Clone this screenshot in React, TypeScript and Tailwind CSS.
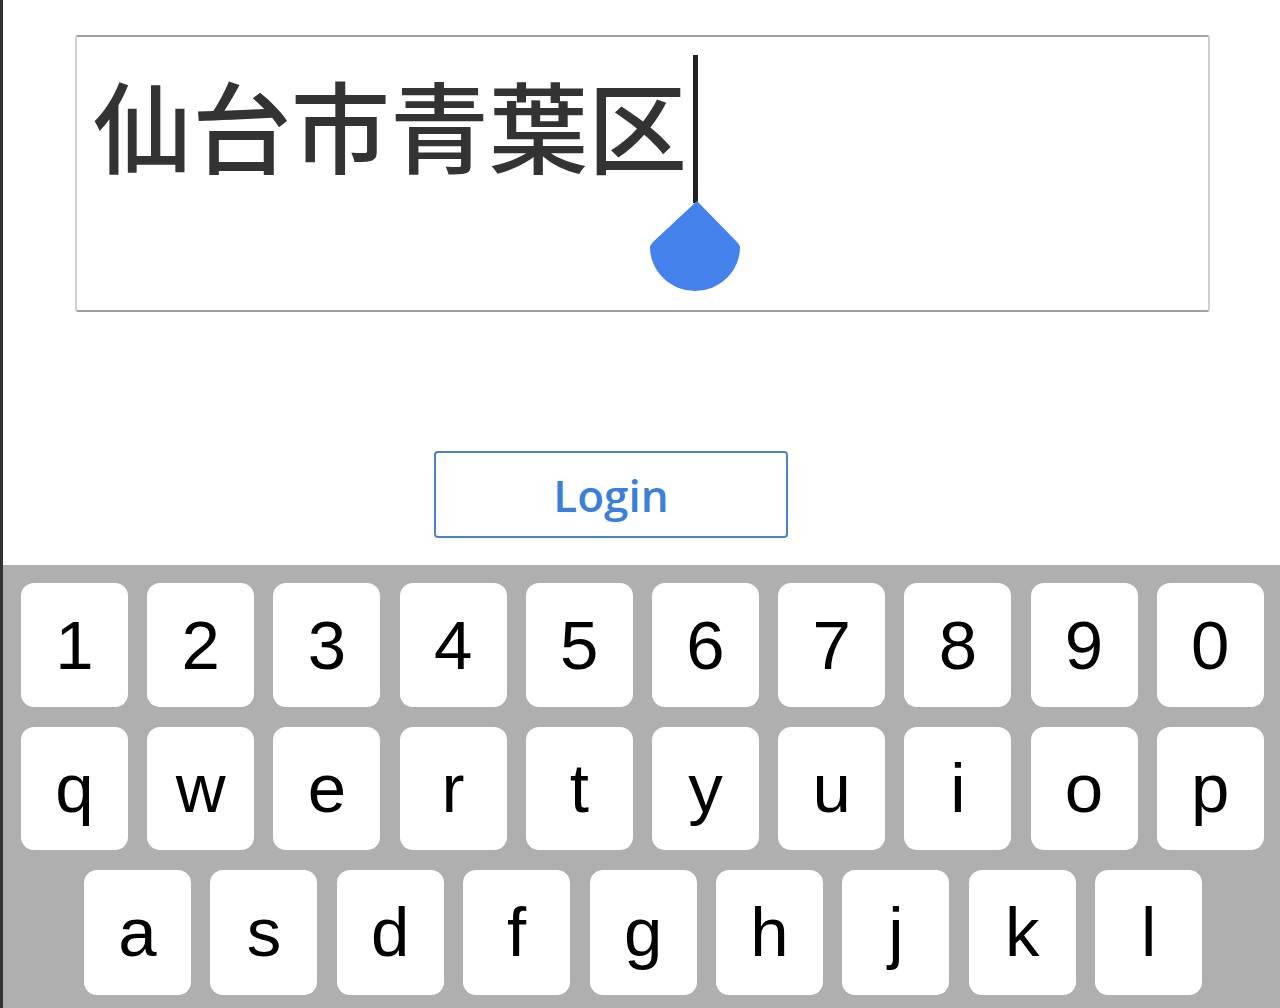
import React from "react";

const row1 = ["1", "2", "3", "4", "5", "6", "7", "8", "9", "0"];
const row2 = ["q", "w", "e", "r", "t", "y", "u", "i", "o", "p"];
const row3 = ["a", "s", "d", "f", "g", "h", "j", "k", "l"];

function Key({ label }: { label: string }) {
  return (
    <div className="flex h-full w-[107px] shrink-0 items-center justify-center rounded-[13px] bg-white text-[69px] leading-none text-black [font-family:'Liberation_Sans',Arial,sans-serif]">
      {label}
    </div>
  );
}

export default function App() {
  return (
    <div className="flex h-[1008px] w-[1280px] overflow-hidden bg-white">
      <div className="h-full w-[3px] shrink-0 bg-[#333333]" />
      <div className="flex flex-1 flex-col">
        <div className="ml-[72px] mt-[35px] h-[280px] w-[1135px] rounded-[3px] border-x-2 border-y-2 border-x-[#d0d0d0] border-y-[#a0a0a0] bg-white">
          <div className="flex items-start pl-[16px] pt-[37px]">
            <span className="text-[99px] font-medium leading-[99px] text-[#333333] [font-family:'Noto_Sans_CJK_JP','Noto_Sans',sans-serif]">
              仙台市青葉区
            </span>
            <div className="relative ml-[6px] mt-[-19px] h-[148px] w-[5px] shrink-0 bg-[#222222]">
              <svg
                width="90"
                height="90"
                viewBox="0 0 90 90"
                className="absolute left-[-43px] top-[146px]"
              >
                <path
                  d="M47 0 L86 40 Q90 44 90 46 A45 44 0 0 1 0 46 Q0 44 4 40 Z"
                  fill="#4682ec"
                />
              </svg>
            </div>
          </div>
        </div>
        <button className="ml-[431px] mt-[139px] flex h-[88px] w-[354px] items-center justify-center rounded-[4px] border-2 border-[#4a80cc] bg-white pt-[2px] text-[44px] font-semibold text-[#3c7fda] [font-family:'Open_Sans',sans-serif]">
          Login
        </button>
        <div className="mt-[27px] flex flex-1 flex-col gap-[20px] bg-[#afafaf] pb-[13px] pt-[18px]">
          <div className="flex h-[124px] gap-[19.2px] pl-[18px]">
            {row1.map((k) => (
              <Key key={k} label={k} />
            ))}
          </div>
          <div className="flex h-[123px] gap-[19.2px] pl-[18px]">
            {row2.map((k) => (
              <Key key={k} label={k} />
            ))}
          </div>
          <div className="flex h-[125px] gap-[19.4px] pl-[81px]">
            {row3.map((k) => (
              <Key key={k} label={k} />
            ))}
          </div>
        </div>
      </div>
    </div>
  );
}
